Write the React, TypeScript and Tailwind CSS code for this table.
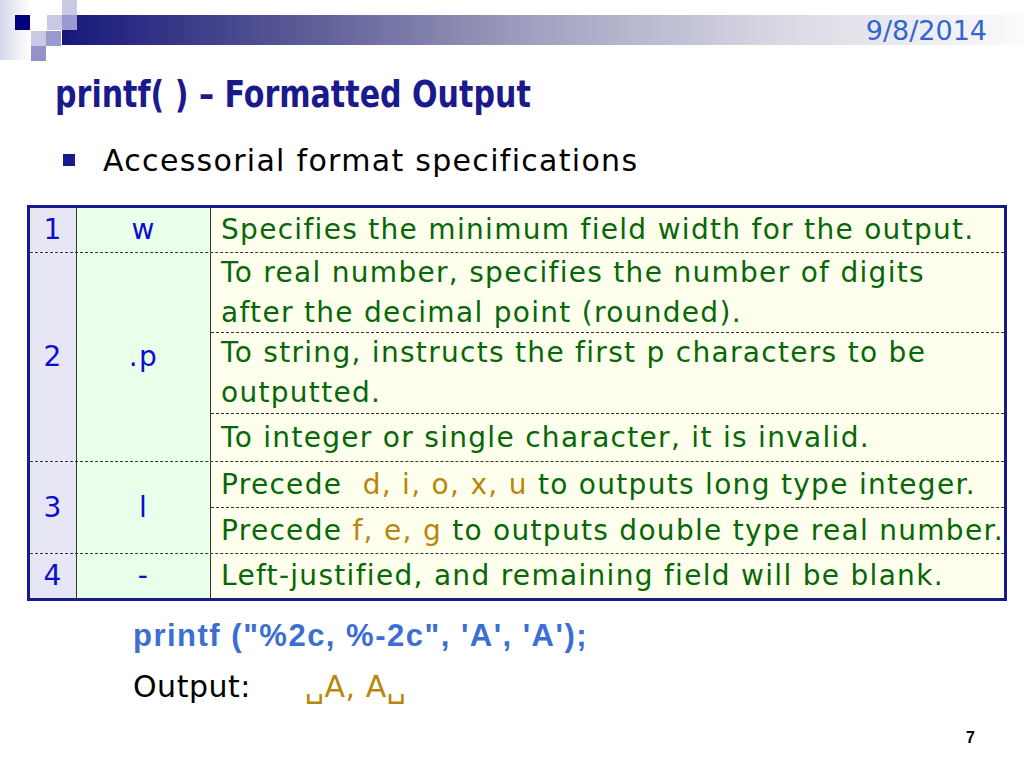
import React from "react";

const Header = () => (
  <header className="relative h-[60px]">
    <svg className="absolute inset-0" width="1024" height="62" viewBox="0 0 1024 62">
      <defs>
        <linearGradient id="bar" x1="0" y1="0" x2="1" y2="0">
          <stop offset="0%" stopColor="#17177b" />
          <stop offset="25%" stopColor="#5b5b96" />
          <stop offset="50%" stopColor="#a3a3c2" />
          <stop offset="75%" stopColor="#d9d9e5" />
          <stop offset="100%" stopColor="#fbfbfd" />
        </linearGradient>
        <linearGradient id="side" x1="0" y1="0" x2="1" y2="0">
          <stop offset="0%" stopColor="#d6d6ec" />
          <stop offset="100%" stopColor="#ffffff" />
        </linearGradient>
      </defs>
      <rect x="0" y="0" width="30" height="60" fill="url(#side)" />
      <rect x="62" y="15" width="962" height="30" fill="url(#bar)" />
      <rect x="15" y="15" width="15" height="15" fill="#00007f" />
      <rect x="47" y="15" width="15" height="15" fill="#c9c9e6" />
      <rect x="62" y="0" width="15" height="15" fill="#c9c9e6" />
      <rect x="62" y="15" width="15" height="15" fill="#9a9acf" />
      <rect x="31" y="31" width="15" height="15" fill="#c9c9e6" />
      <rect x="46" y="31" width="15" height="15" fill="#9a9acf" />
      <rect x="31" y="46" width="15" height="15" fill="#9393c9" />
    </svg>
    <div className="relative flex justify-end pr-[37px] pt-[15px] text-[27px] leading-[32px] text-[#3366cc] font-['DejaVu_Sans',sans-serif]">
      9/8/2014
    </div>
  </header>
);

const G = ({ children }: { children: React.ReactNode }) => (
  <span className="text-[#b8860b]">{children}</span>
);

const Cell = ({
  h,
  border = true,
  children,
}: {
  h: string;
  border?: boolean;
  children: React.ReactNode;
}) => (
  <div
    className={`${h} flex flex-col justify-center pl-[10px] leading-[40px] whitespace-nowrap ${
      border ? "border-b border-dashed border-[#333]" : ""
    }`}
  >
    {children}
  </div>
);

const Group = ({
  num,
  code,
  last = false,
  children,
}: {
  num: string;
  code: string;
  last?: boolean;
  children: React.ReactNode;
}) => (
  <div className={`flex ${last ? "" : "border-b border-dashed border-[#333]"}`}>
    <div className="w-[47px] shrink-0 bg-[#e6e6f4] border-r border-[#333] flex items-center justify-center text-[#0d0dd0]">
      {num}
    </div>
    <div className="w-[134px] shrink-0 bg-[#eaffea] border-r border-[#333] flex items-center justify-center text-[#0d0dd0]">
      {code}
    </div>
    <div className="flex-1 flex flex-col bg-[#ffffee] text-[#066806]">{children}</div>
  </div>
);

export default function App() {
  return (
    <div className="w-[1024px] h-[768px] bg-white overflow-hidden flex flex-col font-['DejaVu_Sans',sans-serif]">
      <Header />
      <h1 className="ml-[55px] mt-[10px] text-[38px] leading-[48px] font-bold text-[#1a1a8c] font-['Liberation_Sans_Narrow','DejaVu_Sans_Condensed',sans-serif]">
        <span className="inline-block origin-left scale-x-[0.88] whitespace-nowrap">
          printf( ) – Formatted Output
        </span>
      </h1>
      <div className="ml-[63px] mt-[22px] flex items-center h-[40px]">
        <div className="w-[12px] h-[12px] bg-[#1a1a8c]" />
        <span className="ml-[28px] text-[30px] tracking-[1.3px] text-black">
          Accessorial format specifications
        </span>
      </div>
      <div className="ml-[27px] mt-[25px] w-[980px] border-[3px] border-[#1a1a8f] text-[28px] tracking-[1.3px]">
        <Group num="1" code="w">
          <Cell h="h-[44px]" border={false}>
            <div>Specifies the minimum field width for the output.</div>
          </Cell>
        </Group>
        <Group num="2" code=".p">
          <Cell h="h-[80px]">
            <div>To real number, specifies the number of digits</div>
            <div>after the decimal point (rounded).</div>
          </Cell>
          <Cell h="h-[81px]">
            <div>To string, instructs the first p characters to be</div>
            <div>outputted.</div>
          </Cell>
          <Cell h="h-[47px]" border={false}>
            <div>To integer or single character, it is invalid.</div>
          </Cell>
        </Group>
        <Group num="3" code="l">
          <Cell h="h-[46px]">
            <div>
              Precede&nbsp; <G>d, i, o, x, u</G> to outputs long type integer.
            </div>
          </Cell>
          <Cell h="h-[45px]" border={false}>
            <div>
              Precede <G>f, e, g</G> to outputs double type real number.
            </div>
          </Cell>
        </Group>
        <Group num="4" code="-" last>
          <Cell h="h-[44px]" border={false}>
            <div>Left-justified, and remaining field will be blank.</div>
          </Cell>
        </Group>
      </div>
      <div className="ml-[133px] mt-[16px] h-[38px] flex items-center text-[31px] tracking-[1.5px] font-bold text-[#3b6fd1] font-['Liberation_Sans',sans-serif] whitespace-nowrap">
        printf ("%2c, %-2c", 'A', 'A');
      </div>
      <div className="ml-[133px] mt-[12px] h-[38px] flex items-center text-[30px] tracking-[0.5px]">
        <span className="text-black w-[172px]">Output:</span>
        <span className="text-[#b8860b]">␣A, A␣</span>
      </div>
      <div className="flex justify-end pr-[49px] mt-[21px] text-[16px] font-bold text-black font-['Liberation_Sans',sans-serif]">
        7
      </div>
    </div>
  );
}
